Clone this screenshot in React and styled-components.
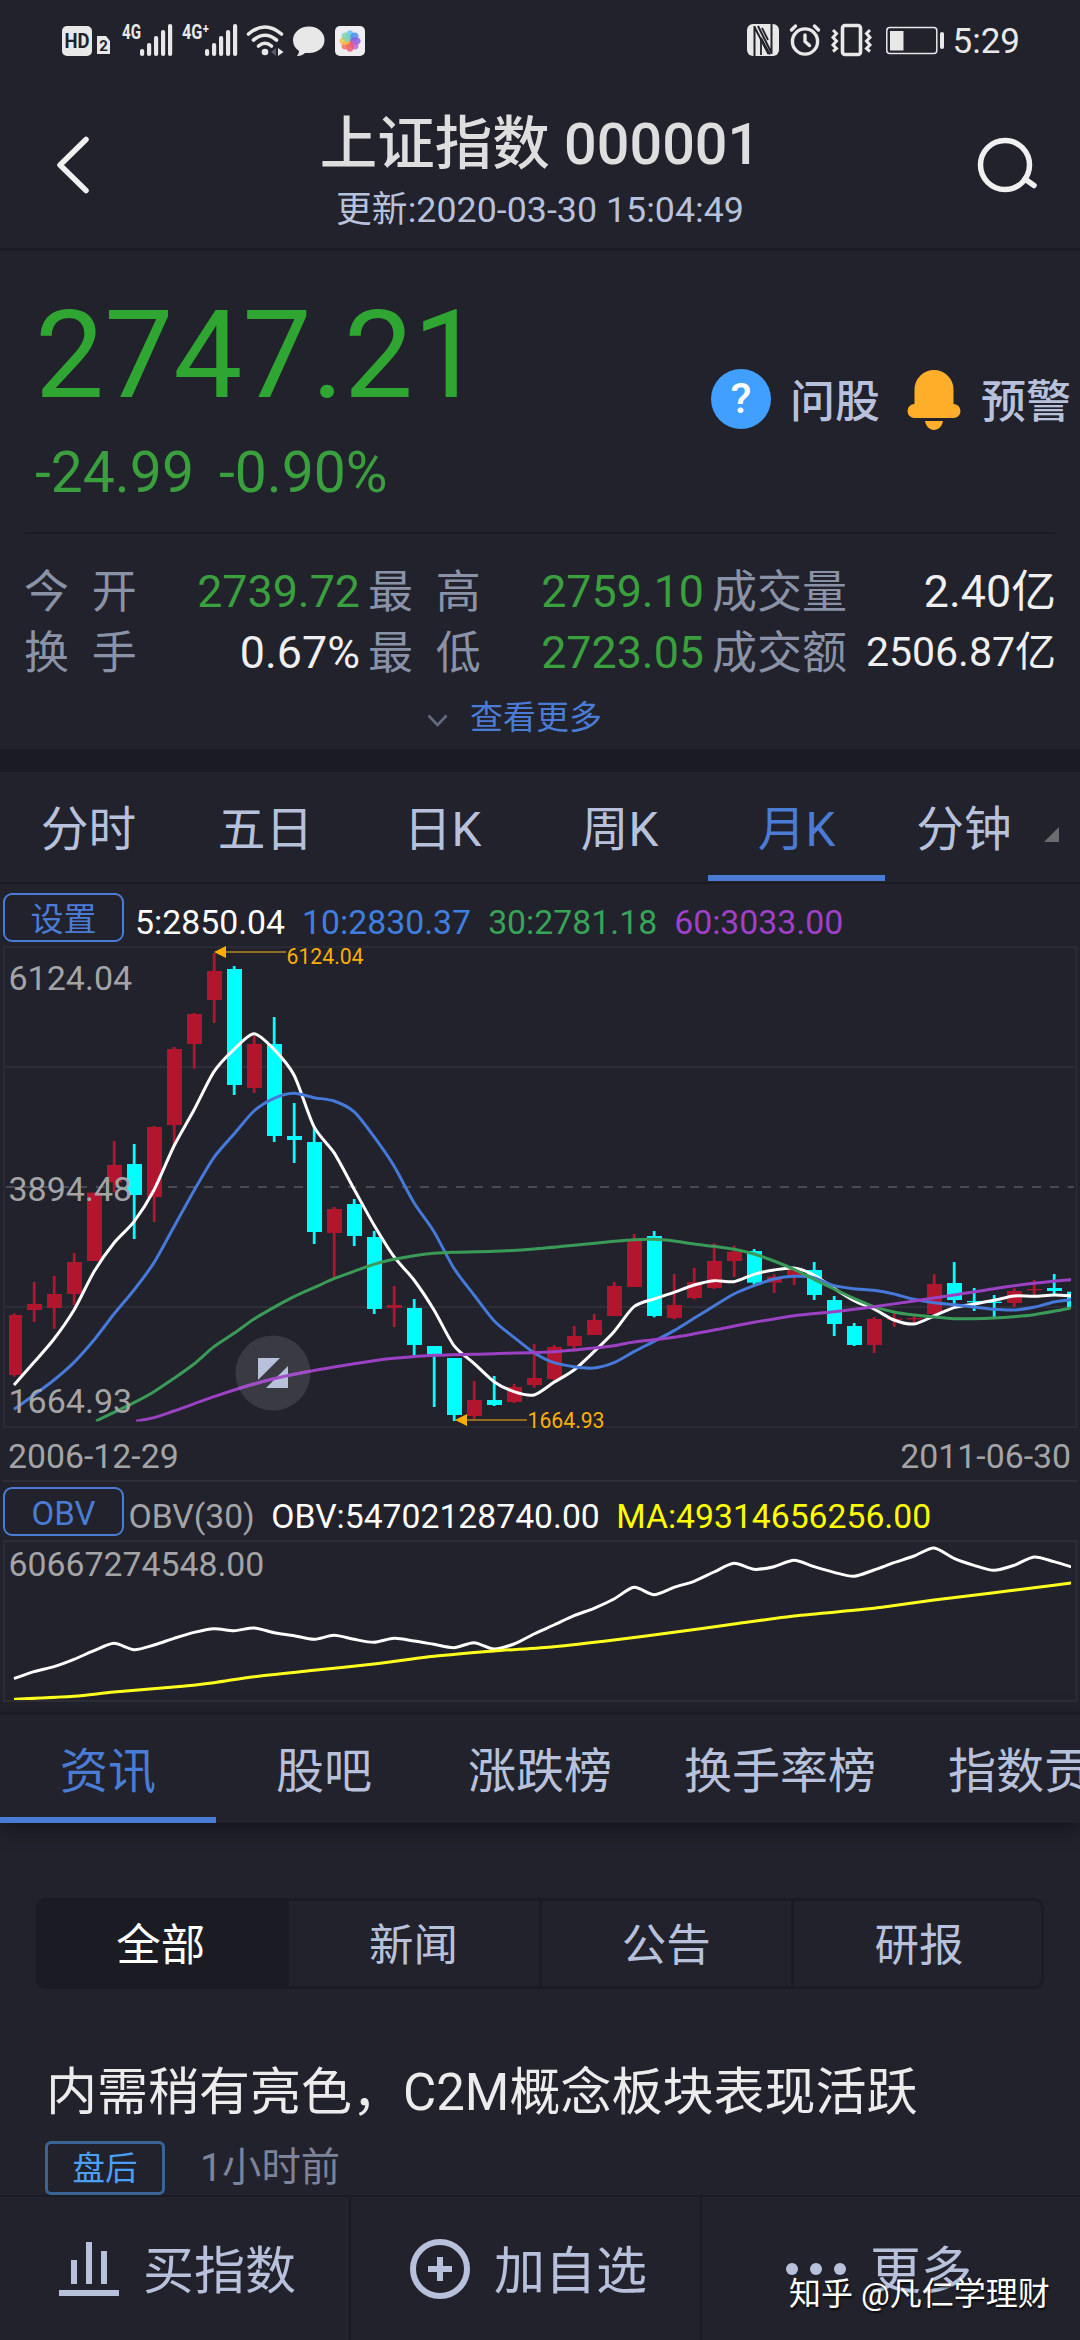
import styled, { createGlobalStyle } from "styled-components";

const GlobalStyle = createGlobalStyle`
  * {
    box-sizing: border-box;
  }

  body {
    margin: 0;
    background-color: #21222b;
    font-family: Roboto, "Noto Sans CJK SC", sans-serif;
  }
`;

const Page = styled.div`
  position: relative;
  width: 1080px;
  height: 2340px;
  overflow: hidden;
  background-color: #21222b;
  color: #b7c1dc;
`;

const StatusBar = styled.div`
  display: flex;
  justify-content: space-between;
  height: 82px;
`;

const Clock = styled.span`
  padding-right: 60px;
  font-size: 35px;
  line-height: 83px;
  color: #e8e8e8;
`;

const StatusRight = styled.div`
  display: flex;
`;

const Header = styled.header`
  display: flex;
  align-items: center;
  justify-content: space-between;
  height: 169px;
  padding: 0 40px 0 50px;
  border-bottom: 3px solid #1a1b23;
`;

const TitleBlock = styled.div`
  padding: 14px 0 0 10px;
  text-align: center;
`;

const Title = styled.h1`
  margin: 0;
  font-size: 57.5px;
  font-weight: 500;
  line-height: 70px;
  color: #dedede;
`;

const Updated = styled.p`
  margin: 5px 0 0;
  font-size: 35.8px;
  line-height: 50px;
`;

const Quote = styled.section`
  height: 498px;
  padding-top: 43px;
`;

const QuoteTop = styled.div`
  display: flex;
  justify-content: space-between;
  height: 238px;
`;

const Price = styled.div`
  padding-left: 35px;
  font-size: 123px;
  line-height: 123px;
  color: #30a632;
`;

const Change = styled.div`
  display: flex;
  gap: 25px;
  margin-top: 26px;
  padding-left: 35px;
  font-size: 57px;
  line-height: 60px;
  color: #3a9f3d;
`;

const Actions = styled.div`
  display: flex;
  align-items: center;
  height: 211px;
  padding-right: 9px;
  font-size: 45px;
  font-weight: 500;
`;

const ActionLabel = styled.span`
  padding-bottom: 2px;
`;

const HelpBadge = styled.span`
  width: 60px;
  height: 60px;
  margin: 0 19px 2px 0;
  border-radius: 50%;
  background-color: #419fff;
  color: white;
  font-size: 43px;
  line-height: 59px;
  text-align: center;
`;

const Rule = styled.div`
  height: 2px;
  margin: 0 25px;
  background-color: #1a1b23;
`;

const Stats = styled.div`
  display: grid;
  grid-template-columns: 336px 336px 344px;
  grid-auto-rows: 61px;
  column-gap: 8px;
  padding: 27px 0 0 24px;
  font-size: 45px;
  line-height: 61px;
`;

const Stat = styled.div`
  display: flex;
  justify-content: space-between;
  white-space: nowrap;
`;

const StatLabel = styled.span`
  padding-top: 1px;
  color: #8a92a8;
  word-spacing: 11.5px;
`;

const StatValue = styled.span`
  color: ${(props) => (props.$green ? "#3a9f3d" : "#efefef")};
  font-size: ${(props) => (props.$small ? "41px" : "44.8px")};
`;

const More = styled.div`
  display: flex;
  align-items: center;
  height: 66px;
  padding: 0 0 3px 427px;
  font-size: 33px;
  color: #4a7cd6;

  svg {
    margin: 12px 22px 0 0;
  }
`;

const Gap = styled.div`
  height: 23px;
  background-color: #1a1b23;
`;

const PeriodTabs = styled.nav`
  display: flex;
  height: 112px;
  border-bottom: 2px solid #1a1b23;
`;

const PeriodTab = styled.div`
  width: 177px;
  height: 109px;
  padding-right: ${(props) => (props.$menu ? "19px" : "0")};
  border-bottom: 6px solid ${(props) => (props.$active ? "#4a7cd6" : "transparent")};
  color: ${(props) => (props.$active ? "#4a7cd6" : "inherit")};
  font-size: 47.7px;
  line-height: 116px;
  text-align: center;
`;

const Legend = styled.div`
  display: flex;
  gap: ${(props) => props.$gap}px;
  height: ${(props) => props.$height}px;
  padding: ${(props) => props.$top}px 0 0 3px;
  font-size: ${(props) => props.$size}px;
  line-height: 60px;
  white-space: nowrap;
`;

const LegendButton = styled.div`
  flex: none;
  width: 121px;
  height: 49px;
  margin-right: ${(props) => props.$pull}px;
  border: 2px solid #4a7cd6;
  border-radius: 9px;
  color: #4a7cd6;
  font-size: 33px;
  line-height: 50px;
  text-align: center;
`;

const LegendText = styled.span`
  color: ${(props) => props.$color};
`;

const Chart = styled.svg`
  display: block;
  overflow: visible;
`;

const DateRow = styled.div`
  display: flex;
  justify-content: space-between;
  height: 53px;
  margin: 0 3px;
  padding: 0 6px 0 5px;
  border-bottom: 2px solid #2d2e37;
  color: #a4a4a6;
  font-size: 33.8px;
  line-height: 55px;
`;

const NewsTabs = styled.nav`
  display: flex;
  height: 111px;
  margin-top: 9px;
  border-top: 3px solid #1a1b23;
  box-shadow: 0 6px 16px rgba(10, 12, 18, 0.55);
`;

const NewsTab = styled.div`
  flex: none;
  min-width: 216px;
  padding: 0 36px;
  border-bottom: 6px solid ${(props) => (props.$active ? "#4a7cd6" : "transparent")};
  color: ${(props) => (props.$active ? "#4a7cd6" : "inherit")};
  font-size: 48px;
  line-height: 114px;
  text-align: center;
`;

const Filters = styled.div`
  display: flex;
  height: 91px;
  margin: 75px 36px 0;
  border-radius: 10px;
  box-shadow: inset 0 0 0 3px #1a1b23;
`;

const Filter = styled.div`
  flex: 1;
  border-right: 3px solid #1a1b23;
  background-color: ${(props) => (props.$active ? "#1a1b23" : "transparent")};
  color: ${(props) => (props.$active ? "#fff" : "inherit")};
  font-size: 44.5px;
  line-height: 97px;
  text-align: center;

  &:first-child {
    border-radius: 10px 0 0 10px;
  }

  &:last-child {
    border-right: none;
  }
`;

const NewsTitle = styled.h2`
  margin: 69px 0 0 46px;
  color: #ececec;
  font-size: 51px;
  font-weight: 400;
  line-height: 70px;
`;

const NewsMeta = styled.div`
  display: flex;
  height: 67px;
  padding: 13px 0 0 45px;
  color: #7d8399;
  font-size: 39.3px;
  line-height: 54px;
`;

const Tag = styled.span`
  width: 120px;
  margin-right: 35px;
  border: 3px solid #3b6496;
  border-radius: 6px;
  color: #4ba0f5;
  font-size: 32.5px;
  line-height: 50px;
  text-align: center;
`;

const BottomBar = styled.footer`
  display: flex;
  height: 145px;
  border-top: 2px solid #1a1b23;
`;

const BottomItem = styled.div`
  display: flex;
  align-items: center;
  width: 351px;
  padding-left: ${(props) => props.$left}px;
  border-right: 2px solid ${(props) => (props.$last ? "transparent" : "#1a1b23")};
  font-size: 51px;
  line-height: 60px;

  svg {
    flex: none;
    margin-right: 24px;
  }

  span {
    padding-top: 7px;
  }
`;

const Watermark = styled.div`
  position: absolute;
  left: 789px;
  top: 2273px;
  color: white;
  font-size: 32px;
  line-height: 42px;
  text-shadow: 1px 2px 2px rgba(0, 0, 0, 0.7);
  white-space: nowrap;
`;

const UP = "#b3152f";
const DOWN = "#00ffff";
const ARROW = "#fbae08";

// [high, body top, body bottom, low, falling]
const candles = [
  [1150, 1155, 1335, 1340], [1056, 1122, 1140, 1176], [1038, 1092, 1134, 1196],
  [969, 996, 1092, 1125], [788, 788, 993, 993], [633, 705, 757, 787],
  [642, 702, 795, 927, 1], [588, 591, 801, 876], [351, 357, 585, 645],
  [249, 252, 342, 416], [69, 123, 210, 279], [108, 117, 465, 495, 1],
  [318, 342, 474, 489], [261, 342, 618, 636, 1], [519, 618, 630, 699, 1],
  [590, 636, 906, 942, 1], [831, 837, 909, 1046], [807, 822, 918, 948, 1],
  [903, 921, 1137, 1152, 1], [1068, 1125, 1134, 1191], [1107, 1134, 1245, 1278, 1],
  [1248, 1248, 1273, 1431, 1], [1284, 1284, 1455, 1473, 1], [1353, 1410, 1458, 1468],
  [1338, 1410, 1425, 1428, 1], [1362, 1371, 1416, 1419], [1242, 1344, 1365, 1373],
  [1245, 1251, 1347, 1353], [1188, 1218, 1248, 1264], [1152, 1170, 1215, 1215],
  [1056, 1068, 1158, 1158], [912, 930, 1071, 1071], [903, 918, 1158, 1162, 1],
  [1032, 1125, 1164, 1168], [1014, 1056, 1104, 1108], [940, 993, 1074, 1077],
  [947, 965, 993, 1041], [957, 963, 1058, 1065, 1], [1033, 1040, 1058, 1089],
  [1014, 1020, 1040, 1065], [996, 1020, 1095, 1110, 1], [1098, 1110, 1182, 1218, 1],
  [1179, 1188, 1245, 1248, 1], [1161, 1167, 1245, 1269], [1149, 1166, 1170, 1191],
  [1152, 1164, 1168, 1180], [1032, 1062, 1152, 1155], [996, 1059, 1110, 1125, 1],
  [1074, 1113, 1117, 1143, 1], [1095, 1115, 1119, 1161, 1], [1075, 1083, 1119, 1131],
  [1050, 1077, 1081, 1095], [1032, 1074, 1083, 1092, 1], [1083, 1085, 1131, 1131, 1],
];

const ma5 = [
  1365, 1297, 1227, 1140, 1025, 939, 875, 780, 648, 540, 425, 358, 311, 358, 435, 590, 668, 777,
  885, 980, 1050, 1140, 1247, 1300, 1355, 1385, 1395, 1357, 1320, 1265, 1205, 1130, 1107, 1087,
  1065, 1052, 1055, 1033, 1020, 1014, 1035, 1075, 1112, 1137, 1170, 1182, 1158, 1133, 1122, 1111,
  1098, 1099, 1095, 1098,
].map((v, i) => [i, v]);

const ma10 = [
  1438, 1395, 1350, 1297, 1230, 1152, 1080, 998, 890, 782, 682, 612, 543, 505, 490, 503, 513, 545,
  620, 708, 818, 905, 1015, 1095, 1172, 1222, 1268, 1298, 1310, 1314, 1298, 1265, 1234, 1202, 1165,
  1128, 1092, 1067, 1047, 1039, 1043, 1067, 1076, 1081, 1092, 1108, 1118, 1124, 1131, 1138, 1140,
  1132, 1116, 1108,
].map((v, i) => [i, v]);

const ma30 = [
  [4.1, 1473], [5, 1447], [6, 1418], [7, 1385], [8, 1345], [9, 1302], [10, 1250], [11, 1210],
  [12, 1167], [13, 1132], [14, 1100], [15, 1073], [16, 1046], [17, 1024], [18, 1003], [19, 988],
  [20, 977], [21, 970], [22, 967], [24, 964], [26, 957], [28, 946], [30, 934], [31, 929],
  [32, 928], [33, 933], [34, 942], [35, 949], [36, 958], [37, 972], [38, 993], [39, 1018],
  [40, 1048], [41, 1077], [42, 1105], [43, 1130], [44, 1146], [45, 1155], [46, 1161], [47, 1166],
  [48, 1166], [49, 1164], [50, 1160], [51, 1154], [52, 1144], [53, 1132],
];

const ma60 = [
  [6.1, 1474], [7, 1463], [8, 1443], [10, 1400], [12, 1362], [14, 1333], [16, 1311], [18, 1292],
  [19, 1285], [21, 1276], [24, 1271], [27, 1265], [29, 1254], [30, 1247], [31, 1236], [33, 1222],
  [35, 1200], [37, 1177], [39, 1157], [41, 1145], [43, 1130], [45, 1113], [47, 1095], [49, 1076],
  [51, 1060], [53, 1048],
];

const obv = [
  776, 755, 740, 718, 692, 670, 689, 675, 655, 637, 626, 632, 624, 638, 647, 658, 646, 658, 667,
  655, 663, 673, 683, 668, 687, 672, 642, 615, 587, 565, 537, 502, 524, 502, 484, 456, 430, 448,
  440, 421, 440, 457, 469, 450, 428, 408, 384, 415, 436, 451, 436, 411, 425, 443,
].map((v, i) => [i, v]);

const obvMa = [
  [0, 838], [3, 829], [5, 816], [8, 801], [10, 788], [12, 770], [15, 751], [18, 732], [21, 709],
  [24, 693], [27, 680], [30, 660], [33, 637], [36, 612], [39, 588], [42, 571], [43.4, 562],
  [46, 540], [49, 518], [51, 503], [53, 488],
];

const xAt = (i) => 14 + i * 20;

const curve = (points) => {
  const p = points.map(([i, v]) => [xAt(i), v / 3]);
  let d = `M${p[0][0]} ${p[0][1]}`;
  for (let i = 0; i < p.length - 1; i++) {
    const a = p[i - 1] || p[i];
    const b = p[i];
    const c = p[i + 1];
    const e = p[i + 2] || c;
    const k = 0.13;
    d += `C${b[0] + (c[0] - a[0]) * k} ${b[1] + (c[1] - a[1]) * k} ${c[0] - (e[0] - b[0]) * k} ${
      c[1] - (e[1] - b[1]) * k
    } ${c[0]} ${c[1]}`;
  }
  return d;
};

const periods = ["分时", "五日", "日K", "周K", "月K", "分钟"];
const newsTabs = ["资讯", "股吧", "涨跌榜", "换手率榜", "指数贡献"];
const filters = ["全部", "新闻", "公告", "研报"];

const stats = [
  { label: "今 开", value: "2739.72", green: true },
  { label: "最 高", value: "2759.10", green: true },
  { label: "成交量", value: "2.40亿" },
  { label: "换 手", value: "0.67%" },
  { label: "最 低", value: "2723.05", green: true },
  { label: "成交额", value: "2506.87亿", small: true },
];

const petals = ["#5cc4f0", "#4c8df0", "#8a5fe0", "#b565d8", "#ef5a6f", "#f2705a", "#f8c24a", "#7fd3b0"];

const Signal = ({ x }) => (
  <g>
    {[49, 43, 36, 30, 24].map((top, i) => (
      <rect key={top} x={x + i * 7} y={top} width="4.2" height={56 - top} rx="2" />
    ))}
  </g>
);

const StatusLeftIcons = () => (
  <svg width="380" height="82" fill="#e8e8e8" fontFamily="Roboto">
    <rect x="62" y="26" width="30" height="30" rx="5" />
    <text x="77" y="48" fontSize="20" fontWeight="700" textAnchor="middle" fill="#21222b" textLength="25" lengthAdjust="spacingAndGlyphs">
      HD
    </text>
    <path d="M97 36h9l4 5v13H97z" />
    <text x="103.5" y="51" fontSize="15" fontWeight="700" textAnchor="middle" fill="#21222b">
      2
    </text>
    <text x="122" y="39" fontSize="20" fontWeight="700" textLength="19" lengthAdjust="spacingAndGlyphs">
      4G
    </text>
    <Signal x={140} />
    <text x="182" y="39" fontSize="20" fontWeight="700" textLength="27" lengthAdjust="spacingAndGlyphs">
      4G⁺
    </text>
    <Signal x={205} />
    <g fill="none" stroke="#e8e8e8" strokeWidth="3.6" strokeLinecap="round">
      <path d="M248.5 34Q265 20 281.5 34" />
      <path d="M253.5 40Q265 30.5 276.5 40" />
      <path d="M258.5 46Q265 40.5 271.5 46" />
    </g>
    <circle cx="265" cy="52" r="3.3" />
    <path d="M278 48l5.500 4-5.500 4z" />
    <path d="M276 48l-5 4 5 4z" fill="#5a5b62" />
    <path d="M309 26.5c9 0 15.5 6 15.5 13.5S318 53 309 53c-2 0-3 0-4 0-2 2-5 3.200-8 3 1-1.500 2-3 2-5-4-2.500-6-6.500-6-11 0-7.500 7-13.500 16-13.500z" />
    <rect x="335" y="26" width="30" height="30" rx="5" fill="#eeeef2" />
    {petals.map((color, i) => (
      <ellipse
        key={color}
        cx="350"
        cy="35.5"
        rx="4"
        ry="5.2"
        fill={color}
        opacity="0.85"
        transform={`rotate(${i * 45} 350 41)`}
      />
    ))}
  </svg>
);

const StatusRightIcons = () => (
  <svg width="213" height="82" viewBox="740 0 213 82" fill="none" stroke="#e8e8e8">
    <rect x="747" y="24" width="32" height="32" rx="6" fill="#e8e8e8" stroke="none" />
    <path d="M754.500 56V26M754.500 27l14 27M771.500 24v30M771.500 53L758 26" stroke="#21222b" strokeWidth="2" />
    <path d="M761 55V38l9 16.500M768 40l-6-12" stroke="#21222b" strokeWidth="1.800" />
    <g strokeWidth="3.4" strokeLinecap="round">
      <circle cx="805" cy="41.5" r="12.6" />
      <path d="M805 35v6.500l4.500 4" />
      <path d="M791.500 30l4-4M818.500 30l-4-4" />
    </g>
    <rect x="842.5" y="25.5" width="18" height="29" rx="2.5" strokeWidth="3.6" />
    <path d="M833 30l3.500 3.500-3.500 4 3.500 3.500-3.500 4 3.500 3.500-3.500 3M870 30l-3.500 3.500 3.500 4-3.500 3.500 3.500 4-3.500 3.500 3.500 3" strokeWidth="3" />
    <rect x="886.8" y="27.5" width="50" height="26" rx="3" strokeWidth="1.5" />
    <rect x="890" y="31" width="13.5" height="19.5" fill="#e8e8e8" stroke="none" />
    <rect x="940" y="32" width="4" height="17" rx="2" fill="#e8e8e8" stroke="none" />
  </svg>
);

const BackIcon = () => (
  <svg width="46" height="66" fill="none" stroke="#f0f0f0" strokeWidth="5.5" strokeLinecap="round" strokeLinejoin="round">
    <path d="M36 7.500L10 33l26 25.500" />
  </svg>
);

const SearchIcon = () => (
  <svg width="66" height="66" fill="none" stroke="#f0f0f0" strokeWidth="5.5" strokeLinecap="round">
    <circle cx="31" cy="33" r="24.5" />
    <path d="M51 47l9 6.500" />
  </svg>
);

const Bell = styled.svg`
  margin: 0 20px 0 27px;
`;

const BellIcon = () => (
  <Bell width="54" height="60" fill="#ffae2a">
    <path d="M7.500 34V19.500a19.500 19.500 0 0 1 39 0V34a7 7 0 0 1 0 14h-39a7 7 0 0 1 0-14z" />
    <path d="M18 51h18c-1 5.500-4.500 9-9 9s-8-3.500-9-9z" />
  </Bell>
);

const Annotation = ({ x, y, drop, children }) => (
  <g>
    <path d={`M${x + 10} ${y}h62`} stroke="#8f6c20" strokeWidth="2" />
    <path d={`M${x} ${y}l12-6v12z`} fill={ARROW} />
    <text x={x + 72.5} y={y + drop} fontSize="21.2" fill={ARROW}>
      {children}
    </text>
  </g>
);

const KLineChart = () => (
  <Chart width="1080" height="484" viewBox="0 15 1080 484">
    <g fill="none" stroke="#2d2e37" strokeWidth="2">
      <rect x="4" y="17" width="1072.5" height="480" strokeWidth="1.5" />
      <path d="M6 137h1068M6 377h1068" />
      <path d="M6 257h1068" stroke="#4a4b52" strokeDasharray="9 9" />
    </g>
    <clipPath id="plot">
      <rect x="9" y="15" width="1062" height="476.5" />
    </clipPath>
    <g clipPath="url(#plot)">
      {candles.map(([high, top, bottom, low, falling], i) => (
        <g key={i} fill={falling ? DOWN : UP}>
          <rect x={xAt(i) - 1.2} y={high / 3} width="2.8" height={(low - high) / 3} />
          <rect x={xAt(i) - 7} y={top / 3} width="15" height={(bottom - top) / 3} />
        </g>
      ))}
      <g fill="none" strokeWidth="3">
        <path d={curve(ma5)} stroke="#fff" />
        <path d={curve(ma10)} stroke="#4579da" />
        <path d={curve(ma30)} stroke="#3a9b59" />
        <path d={curve(ma60)} stroke="#9c41c4" />
      </g>
    </g>
    <g fontSize="34" fill="#a4a4a6">
      <text x="8.5" y="60.2">6124.04</text>
      <text x="8.5" y="270.8">3894.48</text>
      <text x="8.5" y="482.8">1664.93</text>
    </g>
    <Annotation x={214} y={22} drop={12}>6124.04</Annotation>
    <Annotation x={455} y={490} drop={7.5}>1664.93</Annotation>
    <circle cx="273" cy="443" r="37.5" fill="#fff" fillOpacity="0.11" />
    <path d="M258 428h22l-22 22zM288 436v22h-22z" fill="#b7c1dc" />
    <clipPath id="toggle">
      <circle cx="273" cy="443" r="37.5" />
    </clipPath>
    <path d={curve(ma60)} fill="none" stroke="#a04dc6" strokeWidth="3" clipPath="url(#toggle)" />
  </Chart>
);

const ObvChart = () => (
  <Chart width="1080" height="163" viewBox="0 120 1080 163">
    <rect x="4" y="121" width="1072.5" height="160" fill="none" stroke="#2d2e37" strokeWidth="1.8" />
    <clipPath id="obvPlot">
      <rect x="9" y="120" width="1062" height="160" />
    </clipPath>
    <g fill="none" strokeWidth="3" clipPath="url(#obvPlot)">
      <path d={curve(obv)} stroke="#fff" />
      <path d={curve(obvMa)} stroke="#ffff1e" />
    </g>
    <text x="8.5" y="156" fontSize="33.8" fill="#a4a4a6">
      60667274548.00
    </text>
  </Chart>
);

const App = () => {
  return (
    <>
      <GlobalStyle />
      <Page>
        <StatusBar>
          <StatusLeftIcons />
          <StatusRight>
            <StatusRightIcons />
            <Clock>5:29</Clock>
          </StatusRight>
        </StatusBar>
        <Header>
          <BackIcon />
          <TitleBlock>
            <Title>上证指数 000001</Title>
            <Updated>更新:2020-03-30 15:04:49</Updated>
          </TitleBlock>
          <SearchIcon />
        </Header>
        <Quote>
          <QuoteTop>
            <div>
              <Price>2747.21</Price>
              <Change>
                <span>-24.99</span>
                <span>-0.90%</span>
              </Change>
            </div>
            <Actions>
              <HelpBadge>?</HelpBadge>
              <ActionLabel>问股</ActionLabel>
              <BellIcon />
              <ActionLabel>预警</ActionLabel>
            </Actions>
          </QuoteTop>
          <Rule />
          <Stats>
            {stats.map((stat) => (
              <Stat key={stat.label}>
                <StatLabel>{stat.label}</StatLabel>
                <StatValue $green={stat.green} $small={stat.small}>
                  {stat.value}
                </StatValue>
              </Stat>
            ))}
          </Stats>
          <More>
            <svg width="21" height="14" fill="none" stroke="#626a80" strokeWidth="2.6">
              <path d="M1.500 1.500l9 9.500 9-9.500" />
            </svg>
            查看更多
          </More>
        </Quote>
        <Gap />
        <PeriodTabs>
          {periods.map((name) => (
            <PeriodTab key={name} $active={name === "月K"} $menu={name === "分钟"}>
              {name}
            </PeriodTab>
          ))}
          <svg width="18" height="110" viewBox="1062 0 18 110" overflow="visible">
            <path d="M1059 55v15h-15z" fill="#6c6c6e" />
          </svg>
        </PeriodTabs>
        <Legend $height={61} $top={9} $size={33.8} $gap={17}>
          <LegendButton $pull={-6}>设置</LegendButton>
          <LegendText $color="#fff">5:2850.04</LegendText>
          <LegendText $color="#3f7fe0">10:2830.37</LegendText>
          <LegendText $color="#37a457">30:2781.18</LegendText>
          <LegendText $color="#a040c8">60:3033.00</LegendText>
        </Legend>
        <KLineChart />
        <DateRow>
          <span>2006-12-29</span>
          <span>2011-06-30</span>
        </DateRow>
        <Legend $height={58} $top={5} $size={33.7} $gap={16.5}>
          <LegendButton $pull={-12}>OBV</LegendButton>
          <LegendText $color="#a4a4a6">OBV(30)</LegendText>
          <LegendText $color="#fff">OBV:54702128740.00</LegendText>
          <LegendText $color="#ffff00">MA:49314656256.00</LegendText>
        </Legend>
        <ObvChart />
        <NewsTabs>
          {newsTabs.map((name) => (
            <NewsTab key={name} $active={name === "资讯"}>
              {name}
            </NewsTab>
          ))}
        </NewsTabs>
        <Filters>
          {filters.map((name) => (
            <Filter key={name} $active={name === "全部"}>
              {name}
            </Filter>
          ))}
        </Filters>
        <NewsTitle>内需稍有亮色，C2M概念板块表现活跃</NewsTitle>
        <NewsMeta>
          <Tag>盘后</Tag>
          1小时前
        </NewsMeta>
        <BottomBar>
          <BottomItem $left={59}>
            <svg width="60" height="54" fill="#b7c1dc">
              <path d="M12 18h6v24h-6zM27 0h6v42h-6zM42 9h6v33h-6zM0 48h60v6H0z" />
            </svg>
            <span>买指数</span>
          </BottomItem>
          <BottomItem $left={59}>
            <svg width="60" height="60" fill="none" stroke="#b7c1dc" strokeWidth="6">
              <circle cx="30" cy="30" r="27" />
              <path d="M18 30h24M30 18v24" />
            </svg>
            <span>加自选</span>
          </BottomItem>
          <BottomItem $left={84} $last>
            <svg width="60" height="12" fill="#b7c1dc">
              <circle cx="6" cy="6" r="6" />
              <circle cx="30" cy="6" r="6" />
              <circle cx="54" cy="6" r="6" />
            </svg>
            <span>更多</span>
          </BottomItem>
        </BottomBar>
        <Watermark>知乎 @凡仁学理财</Watermark>
      </Page>
    </>
  );
};

export default App;
